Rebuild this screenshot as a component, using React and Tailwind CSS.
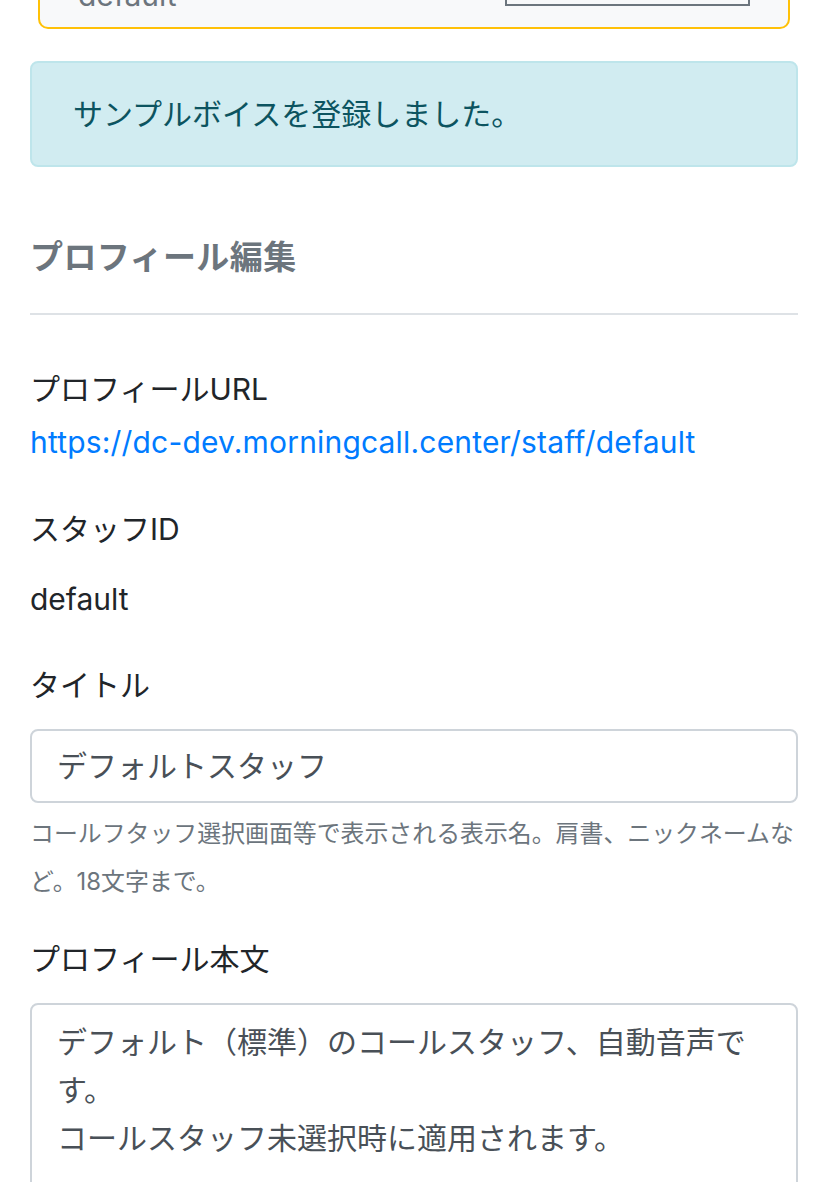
const sans = { fontFamily: 'Inter, "Noto Sans CJK JP", sans-serif' };

function Label({ children, className = '' }) {
    return <div className={`text-[30px] leading-[45px] text-[#212529] ${className}`}>{children}</div>;
}

export default function App() {
    return (
        <div className="bg-white min-h-[1182px] overflow-hidden" style={sans}>
            {/* voice card, scrolled mostly off the top */}
            <div className="mx-[38px] mt-[-61px] h-[90px] rounded-[10px] border-2 border-[#ffc107] bg-[#f8f9fa] flex justify-between pl-[38px] pr-[38px]">
                <div className="mt-[32px] text-[30px] leading-[45px] text-[#6c757d]">default</div>
                <div className="w-[245px] h-[65px] border-2 border-[#6c757d] bg-[#f8f9fa]" />
            </div>

            <div className="px-[30px]">
                {/* alert */}
                <div className="mt-[32px] h-[106px] rounded-[8px] border-2 border-[#bee5eb] bg-[#d1ecf1] pl-[41px] flex items-center">
                    <span className="text-[30px] leading-[45px] text-[#0c5460]">サンプルボイスを登録しました。</span>
                </div>

                <h2 className="mt-[70px] text-[33px] leading-[40px] font-bold text-[#6c757d] tracking-[0.4px]">プロフィール編集</h2>
                <hr className="mt-[36px] border-0 h-[2px] bg-[#dee2e6]" />

                <Label className="mt-[52px]">プロフィールURL</Label>
                <a href="#" className="block mt-[8px] text-[30px] leading-[45px] text-[#007bff] tracking-[0.18px]">
                    https://dc-dev.morningcall.center/staff/default
                </a>

                <Label className="mt-[42px]">スタッフID</Label>
                <div className="mt-[25px] text-[30px] leading-[45px] text-[#212529]">default</div>

                <Label className="mt-[41px]">タイトル</Label>
                <div className="mt-[21px] h-[74px] rounded-[8px] border-2 border-[#ced4da] pl-[25px] flex items-center">
                    <span className="text-[30px] leading-[45px] text-[#495057]">デフォルトスタッフ</span>
                </div>
                <p className="mt-[7px] text-[23.9px] leading-[48px] text-[#6c757d]">
                    コールフタッフ選択画面等で表示される表示名。肩書、ニックネームなど。18文字まで。
                </p>

                <Label className="mt-[31px]">プロフィール本文</Label>
                <div className="mt-[21px] h-[260px] rounded-[8px] border-2 border-[#ced4da] pl-[25px] pr-[15px] pt-[13px]">
                    <p className="text-[30px] leading-[48px] text-[#495057] whitespace-pre-line">
                        {'デフォルト（標準）のコールスタッフ、自動音声です。\nコールスタッフ未選択時に適用されます。'}
                    </p>
                </div>
            </div>
        </div>
    );
}
